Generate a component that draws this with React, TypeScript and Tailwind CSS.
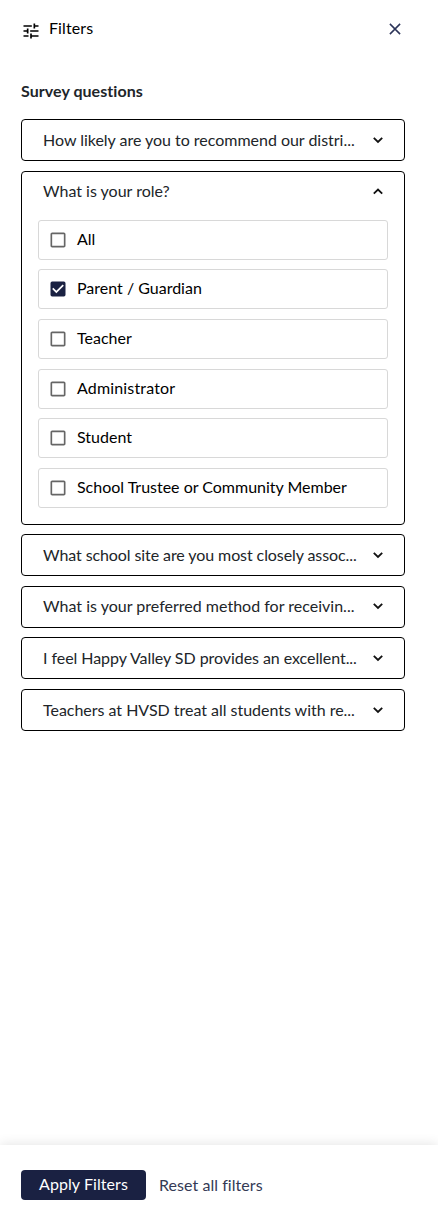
import { MdCheckBox, MdCheckBoxOutlineBlank, MdTune } from "react-icons/md";

const roles = [
  { label: "All", checked: false, className: "mt-[8px]" },
  { label: "Parent / Guardian", checked: true, className: "mt-[9px]" },
  { label: "Teacher", checked: false, className: "mt-[10px]" },
  { label: "Administrator", checked: false, className: "mt-[10px] tracking-[0.16px]" },
  { label: "Student", checked: false, className: "mt-[9px]" },
  { label: "School Trustee or Community Member", checked: false, className: "mt-[10px] tracking-[-0.01px]" },
];

const questions = [
  { title: "What school site are you most closely assoc...", className: "mt-[9px] tracking-[-0.09px]" },
  { title: "What is your preferred method for receivin...", className: "mt-[10px] pb-[2px] tracking-[0.01px]" },
  { title: "I feel Happy Valley SD provides an excellent...", className: "mt-[9px] tracking-[-0.06px]" },
  { title: "Teachers at HVSD treat all students with re...", className: "mt-[10px] tracking-[-0.02px]" },
];

const Chevron = ({ up = false }: { up?: boolean }) => {
  return (
    <svg viewBox="0 0 10 10" className="size-[10px] shrink-0 fill-none stroke-[#111111] stroke-[1.8]">
      <path d={up ? "M.8 6.7 5 2.5l4.2 4.2" : "M.8 2.8 5 7l4.2-4.2"} />
    </svg>
  );
};

const Question = ({ title, className }: { title: string; className: string }) => {
  return (
    <button
      className={`flex h-[42px] w-full items-center justify-between rounded-[4px] border border-black pl-[21px] pr-[21px] text-left ${className}`}
    >
      <span className="whitespace-nowrap">{title}</span>
      <Chevron />
    </button>
  );
};

const RoleOption = ({ label, checked, className }: { label: string; checked: boolean; className: string }) => {
  return (
    <button
      role="checkbox"
      aria-checked={checked}
      className={`flex h-[40px] w-full items-center rounded-[3px] border border-[#d8d8d8] pl-[9px] text-black ${className}`}
    >
      {checked ? (
        <MdCheckBox className="size-[20px] text-[#1a2142]" />
      ) : (
        <MdCheckBoxOutlineBlank className="size-[20px] text-[#666666]" />
      )}
      <span className="ml-[9px] pb-[2px]">{label}</span>
    </button>
  );
};

export default function App() {
  return (
    <div className="flex h-[1209px] w-[438px] flex-col bg-white font-['Lato',sans-serif] text-[16px] leading-[24px] text-[#212529] [font-variant-ligatures:none]">
      <header className="flex h-[58px] items-center justify-between pl-[21px] pr-[37px]">
        <h1 className="flex items-center gap-[8px] text-black">
          <MdTune className="mt-[4px] size-[20px]" />
          <span className="pb-[2px] tracking-[0.1px]">Filters</span>
        </h1>
        <button aria-label="Close">
          <svg viewBox="0 0 12 12" className="size-[12px] fill-none stroke-[#2b3358] stroke-[1.5]">
            <path d="m.9.9 10.2 10.2M11.1.9.9 11.1" />
          </svg>
        </button>
      </header>
      <main className="flex-1 pl-[21px] pr-[33px] pt-[21px]">
        <h2 className="font-bold tracking-[0.05px]">Survey questions</h2>
        <Question title="How likely are you to recommend our distri..." className="mt-[16px] tracking-[-0.02px]" />
        <section className="mt-[10px] h-[354px] rounded-[4px] border border-black px-[16px]">
          <button className="flex h-[40px] w-full items-center justify-between pl-[5px] pr-[5px]">
            <span className="pb-[2px]">What is your role?</span>
            <Chevron up />
          </button>
          {roles.map((role) => (
            <RoleOption key={role.label} {...role} />
          ))}
        </section>
        {questions.map((question) => (
          <Question key={question.title} {...question} />
        ))}
      </main>
      <footer className="flex h-[64px] items-center gap-[13px] pl-[21px] pt-[16px] shadow-[0_0_12px_rgba(0,0,0,0.12)]">
        <button className="h-[30px] w-[125px] rounded-[4px] bg-[#1a2142] pb-[2px] tracking-[0.08px] text-white">Apply Filters</button>
        <button className="tracking-[0.05px] text-[#343a55]">Reset all filters</button>
      </footer>
    </div>
  );
}
